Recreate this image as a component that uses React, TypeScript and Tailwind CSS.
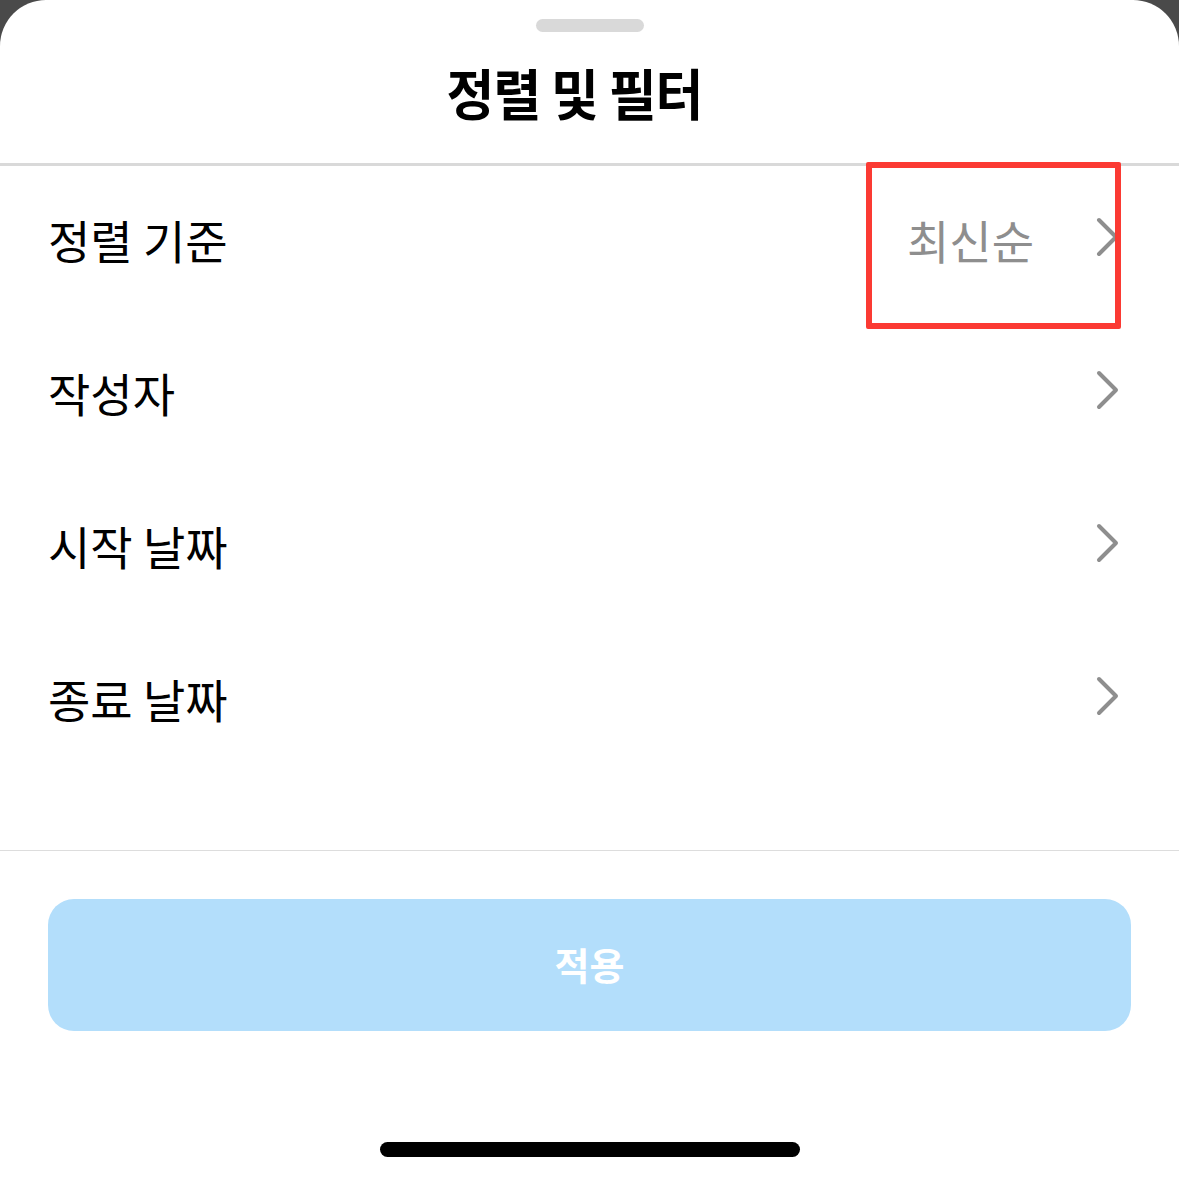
const rows = [
  { label: '정렬 기준', value: '최신순' },
  { label: '작성자', value: '' },
  { label: '시작 날짜', value: '' },
  { label: '종료 날짜', value: '' },
];

function Chevron() {
  return (
    <svg width="24" height="40" viewBox="0 0 24 40" fill="none" aria-hidden="true">
      <path d="M3 3 L20 20 L3 37" stroke="#8e8e8e" strokeWidth="4" strokeLinecap="round" strokeLinejoin="round" />
    </svg>
  );
}

export default function App() {
  return (
    <div
      className="w-[1179px] h-[1181px] bg-[#4a4a4a] overflow-hidden"
      style={{ fontFamily: '"Noto Sans CJK KR", "Noto Sans", sans-serif' }}
    >
      <div className="relative flex flex-col h-full bg-white rounded-t-[46px]">
        {/* handle */}
        <div className="flex justify-center pt-[19px]">
          <div className="w-[108px] h-[13px] rounded-full bg-[#d9d9d9]" />
        </div>

        {/* title */}
        <div className="h-[134px] flex items-center justify-center pr-[30px] border-b-[3px] border-[#d9d9d9]">
          <h1 className="text-[52px] font-bold text-black tracking-[-1px] leading-none mt-[-12px] scale-y-[1.05]">정렬 및 필터</h1>
        </div>

        {/* rows */}
        <ul className="flex flex-col pt-[1px]">
          {rows.map((row) => (
            <li key={row.label} className="h-[153px] flex items-center justify-between pl-[48px] pr-[59px] pb-[9px]">
              <span className="text-[46px] text-black leading-none">{row.label}</span>
              <span className="flex items-center gap-[62px]">
                {row.value && <span className="text-[46px] text-[#8e8e8e] leading-none">{row.value}</span>}
                <span className="-mt-[4px]"><Chevron /></span>
              </span>
            </li>
          ))}
        </ul>

        {/* footer */}
        <div className="mt-[71px] border-t border-[#dddddd] px-[48px] pt-[48px]">
          <button className="w-full h-[132px] rounded-[26px] bg-[#b3defb] text-white text-[38px] font-bold pb-[4px]">
            적용
          </button>
        </div>

        <div className="flex justify-center mt-auto pb-[24px]">
          <div className="w-[420px] h-[15px] rounded-full bg-black" />
        </div>

        {/* red annotation box */}
        <div className="absolute left-[866px] top-[162px] w-[255px] h-[167px] border-[6px] border-[#fb3a33] rounded-[2px]" />
      </div>
    </div>
  );
}
